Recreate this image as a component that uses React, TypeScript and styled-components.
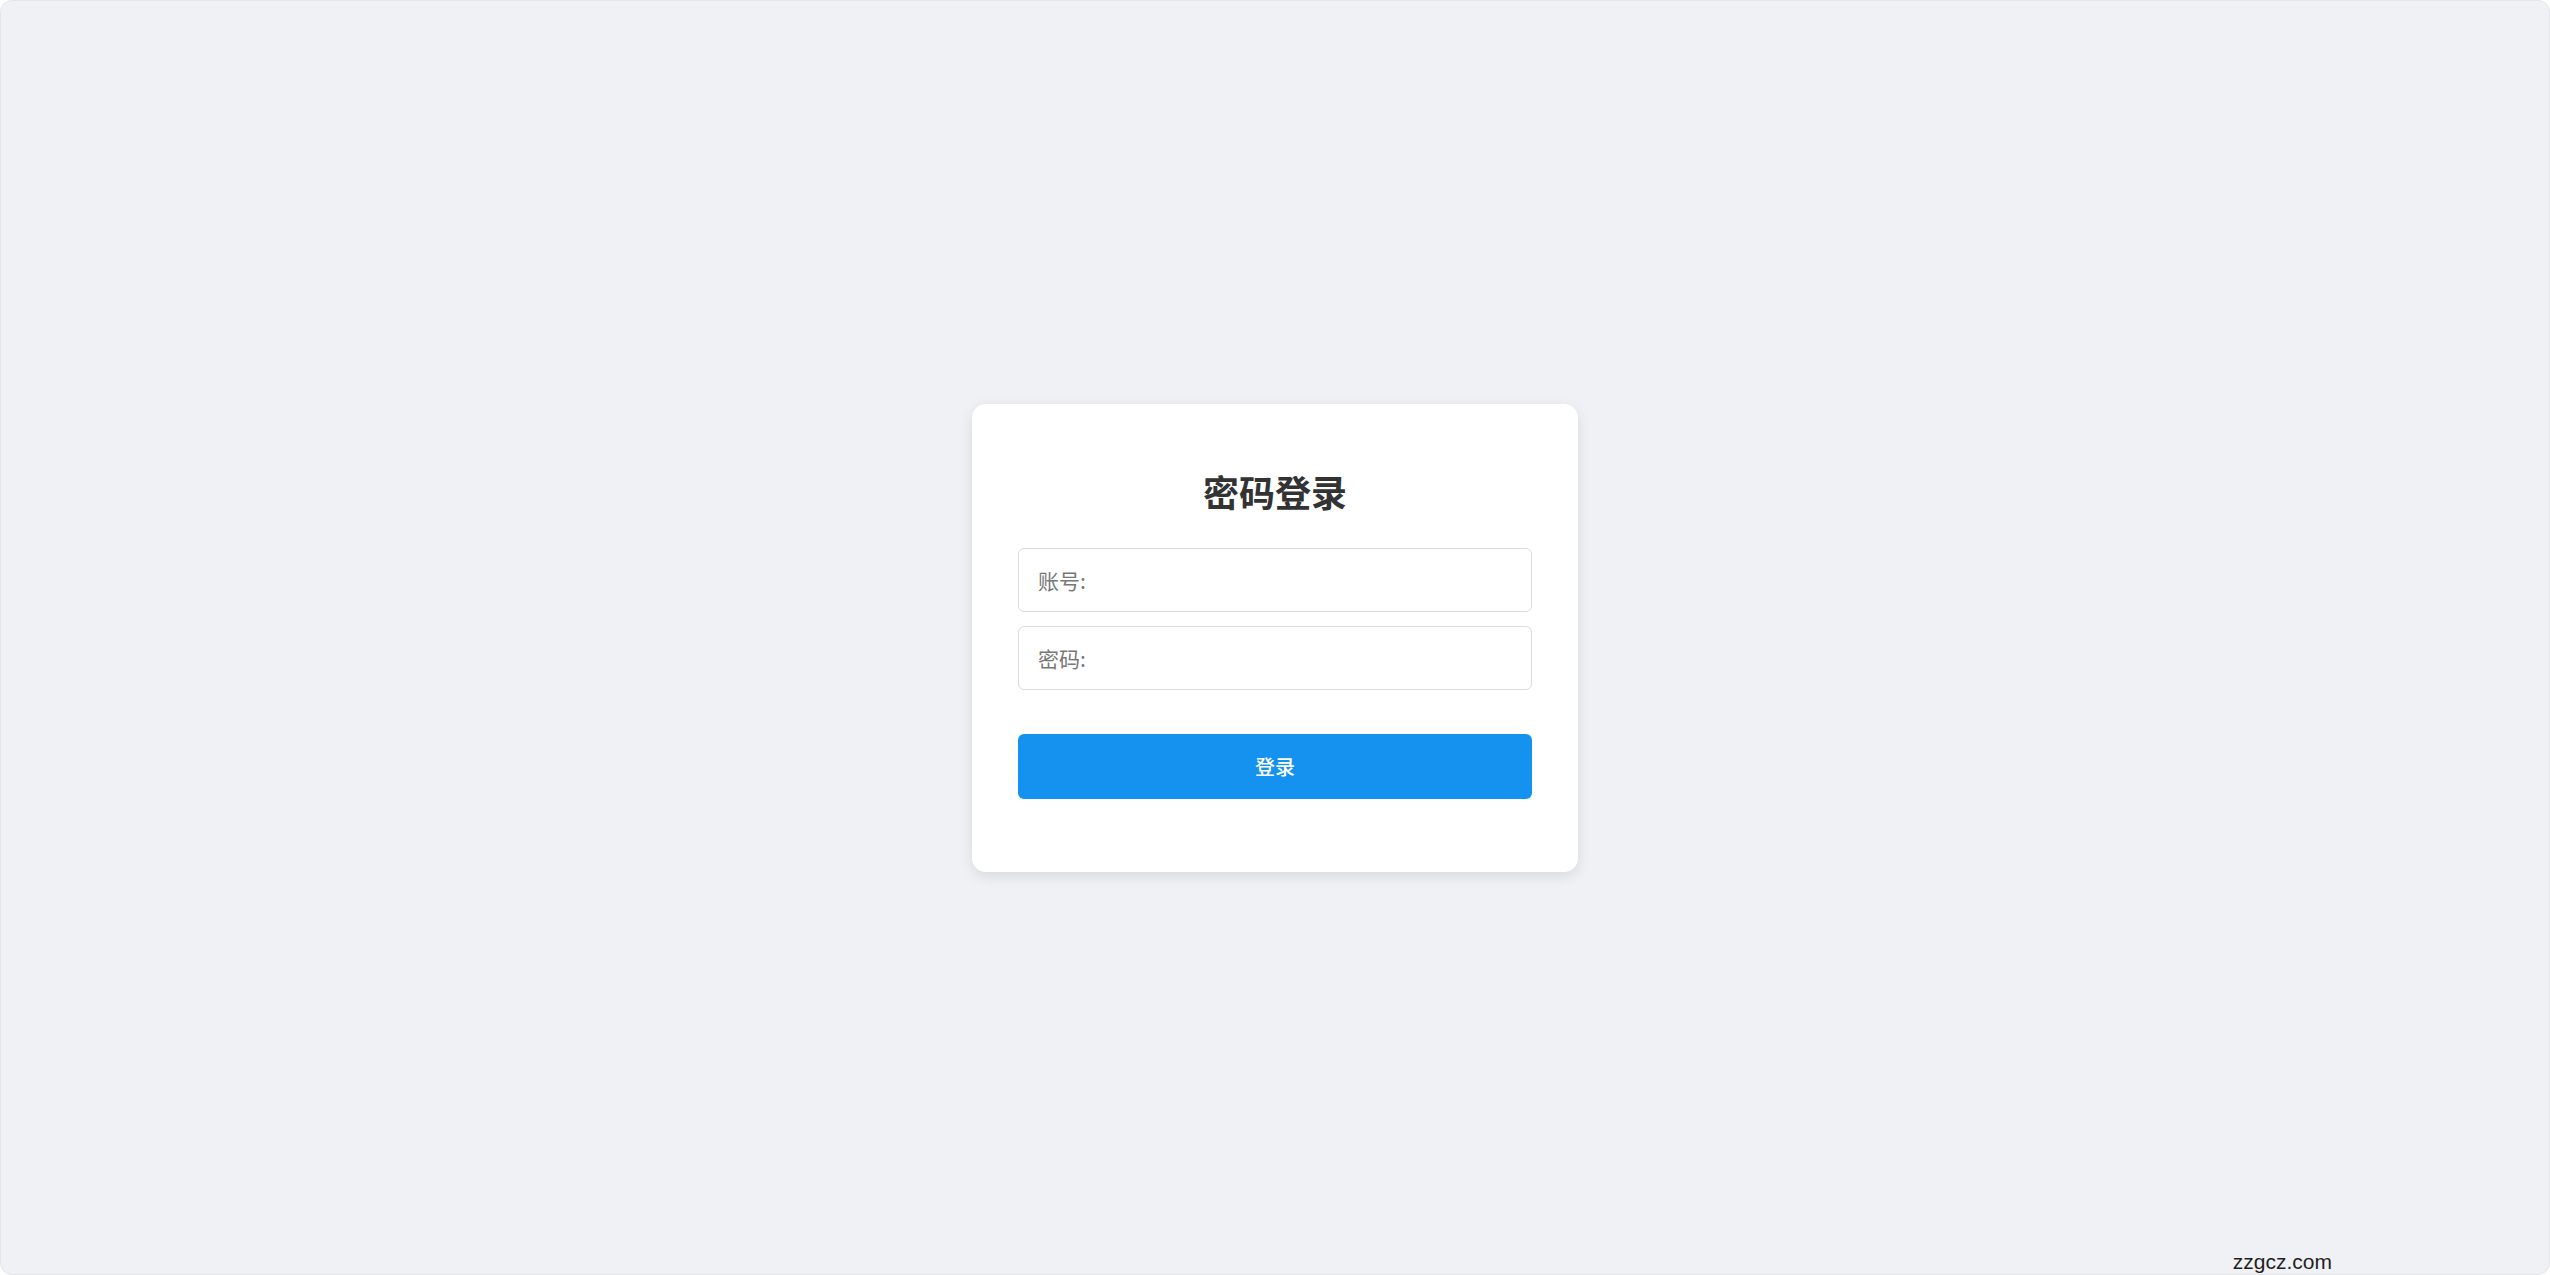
import React from 'react';
import styled, { createGlobalStyle } from 'styled-components';

const GlobalStyle = createGlobalStyle`
  html, body {
    margin: 0;
    padding: 0;
  }
  body {
    font-family: "Noto Sans", "Noto Sans CJK SC", sans-serif;
    background: #ffffff;
  }
  * {
    box-sizing: border-box;
  }
`;

const Frame = styled.div`
  position: relative;
  height: 100vh;
  display: flex;
  align-items: center;
  justify-content: center;
  background: #f0f1f4;
  border: 1px solid #e4e5e8;
  border-radius: 12px;
  overflow: hidden;
`;

const Card = styled.form`
  width: 606px;
  padding: 66px 46px 73px;
  background: #ffffff;
  border-radius: 14px;
  box-shadow: 0 4px 14px rgba(0, 0, 0, 0.1);
  display: flex;
  flex-direction: column;
`;

const Title = styled.h2`
  margin: 0 0 35px;
  text-align: center;
  font-family: "Noto Sans CJK SC", sans-serif;
  font-size: 36px;
  line-height: 43px;
  font-weight: 700;
  color: #333333;
`;

const Fields = styled.div`
  display: flex;
  flex-direction: column;
  gap: 14px;
`;

const Input = styled.input`
  width: 100%;
  height: 64px;
  padding: 0 19px;
  border: 1px solid #dcdcdf;
  border-radius: 6px;
  background: #ffffff;
  font-family: "Noto Sans CJK SC", sans-serif;
  font-size: 21px;
  color: #333;
  outline: none;

  &::placeholder {
    color: #777777;
  }
`;

const SubmitButton = styled.button`
  margin-top: 44px;
  height: 65px;
  width: 100%;
  border: none;
  border-radius: 6px;
  background: #1592ef;
  color: #ffffff;
  font-family: "Noto Sans CJK SC", sans-serif;
  font-size: 20px;
  font-weight: 500;
  cursor: pointer;
`;

const Watermark = styled.div`
  position: absolute;
  right: 217px;
  bottom: 0;
  font-family: "Liberation Sans", Arial, sans-serif;
  font-size: 21px;
  line-height: 24px;
  color: #1f1f1f;
`;

export default function App() {
  return (
    <>
      <GlobalStyle />
      <Frame>
        <Card onSubmit={(e) => e.preventDefault()}>
          <Title>密码登录</Title>
          <Fields>
            <Input type="text" placeholder="账号:" />
            <Input type="password" placeholder="密码:" />
          </Fields>
          <SubmitButton type="submit">登录</SubmitButton>
        </Card>
        <Watermark>zzgcz.com</Watermark>
      </Frame>
    </>
  );
}
